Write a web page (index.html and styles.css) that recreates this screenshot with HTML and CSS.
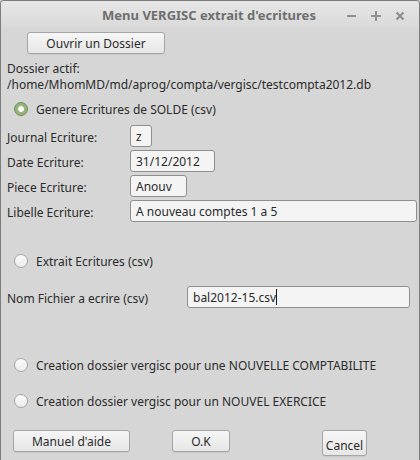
FILE: index.html
```html
<!DOCTYPE html>
<html lang="fr">
<head>
    <meta charset="UTF-8">
    <title>Menu VERGISC extrait d'ecritures</title>
    <link rel="stylesheet" href="styles.css">
</head>
<body>
    <div id="window">
        <div class="titlebar">
            <span></span>
            <span class="title">Menu VERGISC extrait d'ecritures</span>
            <div class="controls">
                <svg width="70" height="28" viewBox="0 0 70 28">
                    <rect x="4" y="14" width="9" height="2" fill="#8f8f8f"/>
                    <rect x="28" y="14" width="10" height="2" fill="#8f8f8f"/>
                    <rect x="32" y="10" width="2" height="10" fill="#8f8f8f"/>
                    <path d="M53.5 11.5 L60.5 18.5 M60.5 11.5 L53.5 18.5" stroke="#8f8f8f" stroke-width="2.2"/>
                </svg>
            </div>
        </div>
        <div class="content">
            <div class="row-open">
                <button class="btn btn-open">Ouvrir un Dossier</button>
            </div>
            <div class="folder">
                <div>Dossier actif:</div>
                <div>/home/MhomMD/md/aprog/compta/vergisc/testcompta2012.db</div>
            </div>
            <label class="radio radio-solde"><span class="dot checked"></span>Genere Ecritures de SOLDE (csv)</label>

            <div class="form">
                <div class="field">
                    <span class="lbl">Journal Ecriture:</span>
                    <span class="input w-z">z</span>
                </div>
                <div class="field">
                    <span class="lbl">Date Ecriture:</span>
                    <span class="input w-date">31/12/2012</span>
                </div>
                <div class="field">
                    <span class="lbl">Piece Ecriture:</span>
                    <span class="input w-piece">Anouv</span>
                </div>
                <div class="field">
                    <span class="lbl">Libelle Ecriture:</span>
                    <span class="input w-lib">A nouveau comptes 1 a 5</span>
                </div>
            </div>

            <label class="radio radio-extrait"><span class="dot"></span>Extrait Ecritures (csv)</label>

            <div class="field field-file">
                <span class="lbl lbl-file">Nom Fichier a ecrire (csv)</span>
                <span class="input w-file">bal2012-15.csv<i class="caret"></i></span>
            </div>

            <label class="radio radio-compta"><span class="dot"></span>Creation dossier vergisc pour une NOUVELLE COMPTABILITE</label>
            <label class="radio radio-exo"><span class="dot"></span>Creation dossier vergisc pour un NOUVEL EXERCICE</label>

            <div class="actions">
                <button class="btn btn-aide">Manuel d'aide</button>
                <button class="btn btn-ok">O.K</button>
                <button class="btn btn-cancel">Cancel</button>
            </div>
        </div>
    </div>
</body>
</html>
```

FILE: styles.css
```css
*{
    margin:0;
    padding:0;
    box-sizing: border-box;
}
body{
    background: #d6d6d6;
    font-family: "Noto Sans", "DejaVu Sans", sans-serif;
    font-size: 12px;
    color: #2b2b2b;
}
#window{
    width: 420px;
    height: 460px;
    border: 1px solid #7c7c7c;
    border-bottom: none;
    border-radius: 4px 4px 0 0;
    background: #d6d6d6;
    overflow: hidden;
}
.titlebar{
    height: 27px;
    display: grid;
    grid-template-columns: 1fr auto 1fr;
    align-items: center;
    background: linear-gradient(#e6e6e6, #d9d9d9);
}
.title{
    font-weight: bold;
    font-size: 13px;
    color: #6e6e6e;
    padding-right: 2px;
}
.controls{
    display: flex;
    justify-content: flex-end;
    padding-right: 6px;
    height: 27px;
}
.content{
    padding: 0 0 0 6px;
}
.btn{
    font-family: "Noto Sans", "DejaVu Sans", sans-serif;
    font-size: 12px;
    color: #2b2b2b;
    height: 22px;
    border: 1px solid #a5a5a5;
    border-radius: 3px;
    background: linear-gradient(#f6f6f6, #e6e6e6);
    box-shadow: 0 1px 0 rgba(0,0,0,0.06);
}
.row-open{
    padding: 4px 0 0 20px;
}
.btn-open{
    width: 138px;
}
.folder{
    margin-top: 7px;
    line-height: 16px;
}
.radio{
    display: flex;
    align-items: center;
    height: 16px;
    padding-left: 7px;
}
.dot{
    width: 14px;
    height: 14px;
    border-radius: 50%;
    border: 1px solid #a3a3a3;
    background: linear-gradient(#fbfbfb, #ececec);
    margin-right: 8px;
    flex: none;
}
.dot.checked{
    border-color: #6f8a57;
    background: radial-gradient(circle, #ffffff 0, #ffffff 2.6px, #97b479 3.2px);
}
.radio-solde{
    margin-top: 8px;
}
.form{
    margin-top: 8px;
    display: flex;
    flex-direction: column;
    gap: 3px;
}
.field{
    display: flex;
    align-items: center;
}
.lbl{
    width: 123px;
    flex: none;
    padding-top: 2px;
}
.input{
    display: inline-flex;
    align-items: center;
    height: 22px;
    padding: 0 5px 0 5px;
    border: 1px solid #8e8e8e;
    border-radius: 3px;
    background: #f4f4f4;
    white-space: nowrap;
}
.w-z{ width: 22px; }
.w-date{ width: 85px; }
.w-piece{ width: 57px; }
.w-lib{ width: 287px; }
.radio-extrait{
    margin-top: 31px;
}
.field-file{
    margin-top: 17px;
}
.lbl-file{
    width: 180px;
}
.w-file{
    width: 223px;
}
.caret{
    display: inline-block;
    width: 1px;
    height: 16px;
    background: #1a1a1a;
}
.radio-compta{
    margin-top: 49px;
}
.radio-exo{
    margin-top: 20px;
}
.actions{
    margin-top: 21px;
    display: flex;
    align-items: flex-start;
}
.btn-aide{
    margin-left: 6px;
    width: 117px;
}
.btn-ok{
    margin-left: 42px;
    width: 58px;
}
.btn-cancel{
    margin-left: 92px;
    width: 45px;
    height: 26px;
    padding-top: 4px;
}
```
